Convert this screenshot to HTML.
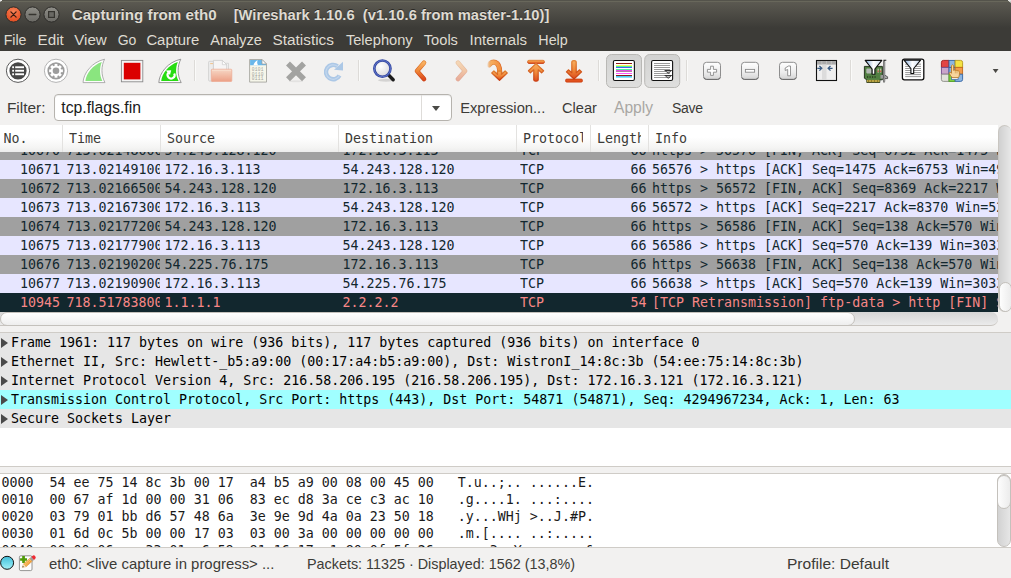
<!DOCTYPE html>
<html><head><meta charset="utf-8"><title>Capturing from eth0 [Wireshark 1.10.6]</title>
<style>*{box-sizing:border-box}
html,body{margin:0;padding:0}
body{width:1011px;height:578px;position:relative;overflow:hidden;background:#f2f1f0;font-family:"Liberation Sans",sans-serif;font-size:15px;color:#3c3b37}
.a{position:absolute}
.ui{position:absolute;font-family:"Liberation Sans",sans-serif;white-space:pre;font-size:15px;line-height:18px;color:#3c3b37}
.mono{font-family:"DejaVu Sans Mono","Liberation Mono",monospace;font-size:13.31px;white-space:pre}
#title{left:0;top:0;width:1011px;height:28px;background:linear-gradient(#54534b 0,#54534b 1px,#68675b 1px,#68675b 2px,#5b5951 2px,#3c3b37 28px);padding-top:1px}
#menubar{left:0;top:28px;width:1011px;height:23px;background:#3c3b37}
.wb{position:absolute;top:6px;width:16px;height:16px;border-radius:8px;border:1px solid #33322e}
#plist{left:0;top:125px;width:998px;height:187px;background:#fff;overflow:hidden}
#phead{left:0;top:0;width:998px;height:27px;background:linear-gradient(#ffffff 0,#ffffff 45%,#f4f4f3 85%,#ececeb 100%);z-index:2}
.hc{position:absolute;top:0;height:27px;line-height:27px;padding-left:6px;color:#3c3b37;border-left:1px solid #e3e2e0;overflow:hidden}
.row{position:absolute;left:0;width:998px;height:19px;line-height:20px;color:#12272e;overflow:hidden}
.c{position:absolute;top:0;height:19px;overflow:hidden}
.lt{background:#e7e6ff}.gr{background:#a0a0a0}.dk{background:#12272e;color:#f78787}
.drow{position:absolute;left:0;width:1011px;height:19px;line-height:20px;color:#000;background:#e6e6e6;padding-left:11px}
.tri{position:absolute;left:0.5px;top:4.5px;width:0;height:0;border-left:7.5px solid #4a4a4a;border-top:5px solid transparent;border-bottom:5px solid transparent}
.hrow{position:absolute;left:1.5px;height:17px;line-height:17px;color:#1a1a1a}
.sep{position:absolute;top:60px;width:2px;height:22px;border-left:1px solid #dbd9d6;border-right:1px solid #fbfbfa}
.ic{position:absolute;overflow:visible}
</style></head><body>
<div id="title" class="a">
<div class="a" style="left:0;top:0;width:2px;height:1px;background:#e8e8e8"></div><div class="a" style="left:0;top:1px;width:1px;height:1px;background:#aaa"></div><div class="a" style="left:1008px;top:0;width:3px;height:1px;background:#e4e4e2"></div><div class="a" style="left:1009px;top:1px;width:2px;height:1px;background:#d0d0cc"></div><div class="a" style="left:1010px;top:2px;width:1px;height:1px;background:#a8a8a2"></div>
<svg class="a" style="left:0;top:0" width="70" height="28" viewBox="0 0 70 28"><defs><radialGradient id="cb" cx="0.5" cy="0.3" r="0.8"><stop offset="0" stop-color="#f58258"/><stop offset="0.6" stop-color="#ea5a2e"/><stop offset="1" stop-color="#d84a20"/></radialGradient><linearGradient id="gb" x1="0" y1="0" x2="0" y2="1"><stop offset="0" stop-color="#8f8e88"/><stop offset="1" stop-color="#6a6964"/></linearGradient></defs><circle cx="13.5" cy="14.5" r="7.6" fill="url(#cb)" stroke="#2e2d2a" stroke-width="1"/><path d="M10.9 11.9L16.1 17.1M16.1 11.9L10.9 17.1" stroke="#3a1c12" stroke-width="1.3" stroke-linecap="round"/><circle cx="32.5" cy="14.5" r="7.6" fill="url(#gb)" stroke="#2e2d2a" stroke-width="1"/><path d="M29.2 14.5H35.8" stroke="#35342f" stroke-width="1.4" stroke-linecap="round"/><circle cx="51.5" cy="14.5" r="7.6" fill="url(#gb)" stroke="#2e2d2a" stroke-width="1"/><rect x="48.6" y="11.6" width="5.8" height="5.8" fill="#6a6964" stroke="#35342f" stroke-width="1.2"/></svg>
<div class="ui" id="f1" style="left:71.7px;top:6px;font-size:15.20px;letter-spacing:0.000px;font-weight:bold;color:#dfdbd2;text-shadow:0 -1px 0 rgba(0,0,0,.5)">Capturing from eth0</div>
<div class="ui" id="f2" style="left:233.7px;top:6px;font-size:14.72px;letter-spacing:0.000px;font-weight:bold;color:#dfdbd2;text-shadow:0 -1px 0 rgba(0,0,0,.5)">[Wireshark 1.10.6  (v1.10.6 from master-1.10)]</div>
</div>
<div id="menubar" class="a">
<div class="ui" id="f3" style="left:3.7px;top:3px;font-size:14.15px;letter-spacing:0.000px;color:#dfdbd2">File</div>
<div class="ui" id="f4" style="left:37.6px;top:3px;font-size:15.20px;letter-spacing:0.000px;color:#dfdbd2">Edit</div>
<div class="ui" id="f5" style="left:74.2px;top:3px;font-size:15.16px;letter-spacing:0.000px;color:#dfdbd2">View</div>
<div class="ui" id="f6" style="left:117.7px;top:3px;font-size:14.00px;letter-spacing:-0.081px;color:#dfdbd2">Go</div>
<div class="ui" id="f7" style="left:146.4px;top:3px;font-size:14.87px;letter-spacing:0.000px;color:#dfdbd2">Capture</div>
<div class="ui" id="f8" style="left:210.2px;top:3px;font-size:14.56px;letter-spacing:0.000px;color:#dfdbd2">Analyze</div>
<div class="ui" id="f9" style="left:272.5px;top:3px;font-size:15.37px;letter-spacing:0.000px;color:#dfdbd2">Statistics</div>
<div class="ui" id="f10" style="left:345.9px;top:3px;font-size:14.65px;letter-spacing:0.000px;color:#dfdbd2">Telephony</div>
<div class="ui" id="f11" style="left:423.8px;top:3px;font-size:14.64px;letter-spacing:0.000px;color:#dfdbd2">Tools</div>
<div class="ui" id="f12" style="left:469.5px;top:3px;font-size:14.99px;letter-spacing:0.000px;color:#dfdbd2">Internals</div>
<div class="ui" id="f13" style="left:538.3px;top:3px;font-size:14.34px;letter-spacing:0.000px;color:#dfdbd2">Help</div>
</div>
<svg class="a" style="left:0;top:51px" width="1011" height="41" viewBox="0 51 1011 41">
<defs>
<linearGradient id="og" x1="0" y1="0" x2="0" y2="1"><stop offset="0" stop-color="#f8b060"/><stop offset="0.5" stop-color="#f08838"/><stop offset="1" stop-color="#dc4a1c"/></linearGradient>
<linearGradient id="ogs" x1="0" y1="0" x2="0" y2="1"><stop offset="0" stop-color="#e08030"/><stop offset="1" stop-color="#c83c10"/></linearGradient>
<linearGradient id="fold" x1="0" y1="0" x2="0" y2="1"><stop offset="0" stop-color="#f8d2bc"/><stop offset="1" stop-color="#ec8c6c"/></linearGradient>
<linearGradient id="btn" x1="0" y1="0" x2="0" y2="1"><stop offset="0" stop-color="#ffffff"/><stop offset="0.6" stop-color="#ececec"/><stop offset="1" stop-color="#d4d4d4"/></linearGradient>
<linearGradient id="tog" x1="0" y1="0" x2="0" y2="1"><stop offset="0" stop-color="#d2d2d1"/><stop offset="1" stop-color="#dfdfde"/></linearGradient>
<linearGradient id="fun" x1="0" y1="0" x2="1" y2="0"><stop offset="0" stop-color="#7fa8d8"/><stop offset="0.5" stop-color="#ffffff"/><stop offset="1" stop-color="#c8daf0"/></linearGradient>
<radialGradient id="lens" cx="0.4" cy="0.35" r="0.7"><stop offset="0" stop-color="#ffffff"/><stop offset="1" stop-color="#d8d8dc"/></radialGradient>
<linearGradient id="tailo" gradientUnits="userSpaceOnUse" x1="487" y1="0" x2="500" y2="0"><stop offset="0" stop-color="#e08030" stop-opacity="0"/><stop offset="0.35" stop-color="#e08030" stop-opacity="0.9"/><stop offset="1" stop-color="#d86020"/></linearGradient><linearGradient id="taili" gradientUnits="userSpaceOnUse" x1="487" y1="0" x2="500" y2="0"><stop offset="0" stop-color="#f8b060" stop-opacity="0"/><stop offset="0.35" stop-color="#f8b060" stop-opacity="0.9"/><stop offset="1" stop-color="#f29040"/></linearGradient>
</defs>
<!-- 1 interfaces -->
<circle cx="18" cy="70.8" r="11.6" fill="#fff" stroke="#5a5a5a" stroke-width="1"/>
<circle cx="18" cy="70.8" r="8.6" fill="#474747"/>
<g fill="#fff"><rect x="12.2" y="66.3" width="1.8" height="1.9"/><rect x="15.2" y="66.3" width="8.8" height="1.9"/><rect x="12.2" y="69.8" width="1.8" height="1.9"/><rect x="15.2" y="69.8" width="8.8" height="1.9"/><rect x="12.2" y="73.3" width="1.8" height="1.9"/><rect x="15.2" y="73.3" width="8.8" height="1.9"/></g>
<!-- 2 options -->
<circle cx="56" cy="70.8" r="11.6" fill="#fff" stroke="#b4b4b4" stroke-width="1"/>
<circle cx="56" cy="70.8" r="8.6" fill="#9c9c9c"/>
<g transform="translate(56 70.8)" fill="#fff">
<circle r="5.2"/>
<g id="teeth"><rect x="-1.4" y="-6.9" width="2.8" height="3"/><rect x="-1.4" y="3.9" width="2.8" height="3"/></g>
<use href="#teeth" transform="rotate(45)"/><use href="#teeth" transform="rotate(90)"/><use href="#teeth" transform="rotate(135)"/>
<circle r="3.3" fill="#9c9c9c"/>
</g>
<!-- 3 start fin -->
<path d="M83 82.6 C83.5 73 92 62 104.6 59.2 C101 66 101 75.5 105 82.6 Z" fill="#fdfdfd" stroke="#a6a6a6" stroke-width="0.9" stroke-linejoin="round"/>
<path d="M85.4 81 C86.2 73.5 92.8 65 101.8 62 C99.3 68 99.5 75.5 102.4 81 Z" fill="#8ae57f"/>
<!-- 4 stop -->
<rect x="121.4" y="60.4" width="21.4" height="21.4" fill="#f4f4f4" stroke="#8a8a8a" stroke-width="0.9"/>
<rect x="123.8" y="62.8" width="16.6" height="16.6" fill="#db0000"/>
<!-- 5 restart fin -->
<path d="M158.8 82.6 C159.3 73 167.8 62 180.8 59.2 C177.2 66 177.2 75.5 181.2 82.6 Z" fill="#fdfdfd" stroke="#8c8c8c" stroke-width="0.9" stroke-linejoin="round"/>
<path d="M161.2 81 C162 73.5 168.6 65 177.8 62 C175.3 68 175.5 75.5 178.6 81 Z" fill="#27dc12"/>
<path d="M174.2 73.4 A3.5 3.5 0 1 1 168.6 72.6" fill="none" stroke="#fff" stroke-width="2.1"/>
<path d="M165.8 70.6 L171.2 70.2 L170 75 Z" fill="#fff"/>
<!-- sep -->
<rect x="194" y="60" width="1" height="21" fill="#dddbd8"/><rect x="195" y="60" width="1" height="21" fill="#fafaf9"/>
<!-- 6 open (disabled) -->
<g opacity="0.8">
<path d="M208.600 62.300 q0 -1 1 -1 h4 v19.800 h-4 q-1 0 -1 -1 z" fill="#ececec" stroke="#c4c4c4" stroke-width="0.800"/>
<rect x="210.200" y="63.200" width="3" height="0.900" fill="#f2b060"/>
<path d="M216 63.300 h12.500 v8 h-12.500 z" fill="#f4f4f4" stroke="#c9c9c9" stroke-width="0.800"/>
<path d="M213.400 60.400 h9 l4.300 4.300 v6 h-13.300 z" fill="#f7f7f7" stroke="#c4c4c4" stroke-width="0.800"/>
<path d="M222.400 60.400 v4.300 h4.300 z" fill="#fff" stroke="#c4c4c4" stroke-width="0.700"/>
<rect x="211.300" y="69.200" width="20.500" height="12.300" rx="0.800" fill="url(#fold)" stroke="#ee9a7c" stroke-width="0.700"/>
<rect x="212" y="69.900" width="19.100" height="0.800" fill="#fbe4d0" opacity="0.800"/>
</g>
<!-- 7 save as (file w/ binary) -->
<path d="M249.600 59.500 h12.400 l4.500 4.500 v18.100 h-16.900 z" fill="#f6f6ea" stroke="#a6a6a0" stroke-width="0.900" stroke-linejoin="round"/>
<path d="M250.100 60 h11.900 l4 4 v1.300 h-15.900 z" fill="#6ab7ea"/>
<path d="M262 59.500 v4.500 h4.500 z" fill="#fdfdfd" stroke="#9c9c96" stroke-width="0.700" stroke-linejoin="round"/>
<path d="M253.500 65.300 c0.600 -2.400 2 -4.200 4.300 -5 c-0.900 1.600 -0.800 3.400 0.300 5 z" fill="#fff"/>
<g font-family="Liberation Mono,monospace" font-size="4.600" letter-spacing="0.240" fill="#a4a49c"><text x="251.800" y="71.100">0101</text><text x="251.800" y="75.600">0110</text><text x="251.800" y="80.100">0111</text></g>
<!-- 8 close -->
<ellipse cx="296" cy="81.200" rx="7" ry="1" fill="#000" opacity="0.060"/>
<path d="M288 63.600 L304 79.200 M304 63.600 L288 79.200" stroke="#a3a3a1" stroke-width="5.600" stroke-linecap="butt"/>
<!-- 9 reload -->
<g opacity="0.95">
<path d="M339.500 75.500 A7.200 7.200 0 1 1 337.500 66.300" fill="none" stroke="#a9c6e6" stroke-width="4.400"/>
<path d="M339.500 75.500 A7.200 7.200 0 1 1 337.500 66.300" fill="none" stroke="#c2d7ee" stroke-width="1.200"/>
<path d="M334 69.800 L343 61.800 L343 70.500 Z" fill="#a9c6e6"/>
</g>
<!-- sep -->
<rect x="358" y="60" width="1" height="21" fill="#dddbd8"/><rect x="359" y="60" width="1" height="21" fill="#fafaf9"/>
<!-- 10 find -->
<ellipse cx="386" cy="80.300" rx="8" ry="1.500" fill="#000" opacity="0.12"/>
<path d="M388.300 74.800 L393.200 79.800" stroke="#1c1c1c" stroke-width="3.400" stroke-linecap="round"/>
<circle cx="382.400" cy="68.600" r="8.100" fill="url(#lens)" stroke="#3447a0" stroke-width="2.600"/>
<circle cx="382.400" cy="68.600" r="8.100" fill="none" stroke="#6278cc" stroke-width="0.900"/>
<!-- 11 back -->
<path d="M424 62.800 L417 71 L424 79" fill="none" stroke="url(#ogs)" stroke-width="4.600" stroke-linecap="round" stroke-linejoin="round"/>
<path d="M424 62.800 L417 71 L424 79" fill="none" stroke="url(#og)" stroke-width="3.400" stroke-linecap="round" stroke-linejoin="round"/>
<!-- 12 forward (disabled) -->
<g opacity="0.4"><path d="M458 62.800 L465 71 L458 79" fill="none" stroke="url(#ogs)" stroke-width="4.600" stroke-linecap="round" stroke-linejoin="round"/>
<path d="M458 62.800 L465 71 L458 79" fill="none" stroke="url(#og)" stroke-width="3.400" stroke-linecap="round" stroke-linejoin="round"/></g>
<!-- 13 jump -->
<g stroke-linejoin="round" stroke-linecap="round">
<path d="M489 65 C491.500 60.500 500 60 499.700 73" fill="none" stroke="url(#tailo)" stroke-width="5.200"/>
<path d="M489 65 C491.500 60.500 500 60 499.700 73" fill="none" stroke="url(#taili)" stroke-width="3.800"/>
<path d="M499.500 80.300 L491.800 73 L493.900 70.900 L497.500 74.200 V71 H501.500 V74.200 L505.100 70.900 L507.200 73 Z" fill="url(#og)" stroke="url(#ogs)" stroke-width="1.300"/>
</g>
<!-- 14 first -->
<g stroke-linejoin="round">
<rect x="527.600" y="60.300" width="16.800" height="3.100" rx="1.300" fill="url(#og)" stroke="url(#ogs)" stroke-width="0.900"/>
<path d="M536 63.600 L543.600 70.800 L541.600 72.800 L538.200 69.800 V80 Q538.200 81.200 536 81.200 Q533.800 81.200 533.800 80 V69.800 L530.400 72.800 L528.400 70.800 Z" fill="url(#og)" stroke="url(#ogs)" stroke-width="1.200"/>
</g>
<!-- 15 last -->
<g stroke-linejoin="round">
<rect x="565.600" y="79.100" width="16.800" height="3" rx="1.200" fill="#e2521e" stroke="#cc4012" stroke-width="0.900"/>
<path d="M574 79 L581.600 71.800 L579.600 69.800 L576.200 72.800 V61.800 Q576.200 60.600 574 60.600 Q571.800 60.600 571.800 61.800 V72.800 L568.400 69.800 L566.400 71.800 Z" fill="url(#og)" stroke="url(#ogs)" stroke-width="1.200"/>
</g>
<!-- sep -->
<rect x="598" y="60" width="1" height="21" fill="#dddbd8"/><rect x="599" y="60" width="1" height="21" fill="#fafaf9"/>
<!-- 16 colorize toggle -->
<rect x="606.500" y="54.500" width="35" height="33" rx="5" fill="url(#tog)" stroke="#b9b8b5" stroke-width="1"/>
<rect x="613.400" y="60.500" width="21" height="20" rx="1.500" fill="#fff" stroke="#111" stroke-width="1.100"/>
<g>
<rect x="616" y="63" width="16" height="1" fill="#8b1a1a"/>
<rect x="616" y="65" width="16" height="1" fill="#f6f65a"/>
<rect x="616" y="66" width="16" height="1" fill="#48f09a"/>
<rect x="616" y="67" width="16" height="1" fill="#4a62f0"/>
<rect x="616" y="69" width="16" height="1" fill="#48f09a"/>
<rect x="616" y="70" width="16" height="1" fill="#e050e0"/>
<rect x="616" y="71" width="16" height="0.800" fill="#a05a8a"/>
<rect x="616" y="73" width="16" height="1" fill="#ff55ff"/>
<rect x="616" y="75" width="16" height="1" fill="#8b1a1a"/>
<rect x="616" y="76" width="16" height="1.600" fill="#48cdf0"/>
</g>
<!-- 17 autoscroll toggle -->
<rect x="644.700" y="54.500" width="35" height="33" rx="5" fill="url(#tog)" stroke="#b9b8b5" stroke-width="1"/>
<rect x="651.600" y="60.500" width="21" height="20" rx="1.500" fill="#fff" stroke="#111" stroke-width="1.100"/>
<g fill="#8e8e8e">
<rect x="654" y="63" width="16" height="0.900"/><rect x="654" y="65" width="16" height="0.900"/><rect x="654" y="67" width="16" height="0.900"/><rect x="654" y="69" width="16" height="0.900"/><rect x="654" y="71" width="16" height="0.900"/><rect x="654" y="73" width="16" height="0.900"/><rect x="654" y="75" width="16" height="0.900"/><rect x="654" y="77" width="16" height="0.900"/>
</g>
<path d="M664 70 h8.500 l-4.250 3.800 z M664 75 h8.500 l-4.250 3.800 z" fill="#333"/>
<path d="M666 71 h4.500 l-2.250 1.800 z M666 76 h4.500 l-2.250 1.800 z" fill="#bbb"/>
<!-- sep -->
<rect x="686" y="60" width="1" height="21" fill="#dddbd8"/><rect x="687" y="60" width="1" height="21" fill="#fafaf9"/>
<!-- 18-20 zoom -->
<g>
<rect x="703.500" y="62.300" width="17" height="17" rx="3" fill="url(#btn)" stroke="#8e8e8e" stroke-width="1"/>
<path d="M703.800 77.500 q0.500 2 3 2 h10.500 q2.500 0 3 -2" fill="none" stroke="#6e6e6e" stroke-width="1"/>
<path d="M710.600 66.200 h2.800 v3.200 h3.200 v2.800 h-3.200 v3.200 h-2.800 v-3.200 h-3.200 v-2.800 h3.200 z" fill="#fff" stroke="#8a8a8a" stroke-width="0.900"/>
<rect x="741.500" y="62.300" width="17" height="17" rx="3" fill="url(#btn)" stroke="#8e8e8e" stroke-width="1"/>
<path d="M741.800 77.500 q0.500 2 3 2 h10.500 q2.500 0 3 -2" fill="none" stroke="#6e6e6e" stroke-width="1"/>
<rect x="745.400" y="69.400" width="9.200" height="2.800" fill="#fff" stroke="#8a8a8a" stroke-width="0.900"/>
<rect x="779.500" y="62.300" width="17" height="17" rx="3" fill="url(#btn)" stroke="#8e8e8e" stroke-width="1"/>
<path d="M779.800 77.500 q0.500 2 3 2 h10.500 q2.500 0 3 -2" fill="none" stroke="#6e6e6e" stroke-width="1"/>
<path d="M785.200 68 l3.300 -2 h2 v9.800 h-2.800 v-6.300 l-2.500 1 z" fill="#fff" stroke="#8a8a8a" stroke-width="0.900"/>
</g>
<!-- 21 resize columns -->
<rect x="816.500" y="60.500" width="20" height="20" fill="#efefef" stroke="#111" stroke-width="1.100"/>
<rect x="817" y="61" width="19" height="3.600" fill="#aaa"/>
<rect x="822" y="64.600" width="4.500" height="15.400" fill="#dcdcdc"/>
<path d="M821.800 61 v3.600 M826.500 61 v3.600 M831.300 61 v3.600" stroke="#c8c8c8" stroke-width="0.700"/>
<path d="M817.300 68.300 h3.600 M819.400 66 l2.400 2.300 l-2.400 2.300 M832.600 68.300 h-3.600 M830.500 66 l-2.400 2.300 l2.400 2.300" fill="none" stroke="#3a5c84" stroke-width="1.300"/>
<!-- sep -->
<rect x="850" y="60" width="1" height="21" fill="#dddbd8"/><rect x="851" y="60" width="1" height="21" fill="#fafaf9"/>
<!-- 22 capture filter -->
<g>
<path d="M864.400 66.400 h18 v13.400 h-2.600 v2.700 h-13 v-2.700 l-2.400 -1.600 z" fill="#517f42" stroke="#1c2a16" stroke-width="0.900" stroke-linejoin="round"/>
<rect x="866.800" y="79.900" width="12.800" height="2.300" fill="#b9a544"/>
<path d="M868.500 80 v2.200 M871.500 80 v2.200 M874.500 80 v2.200 M877.500 80 v2.200" stroke="#7c6c24" stroke-width="0.700"/>
<rect x="866.300" y="68.600" width="5.400" height="4.800" rx="0.800" fill="#b4b8b4"/>
<rect x="877.600" y="68.600" width="1.100" height="4" fill="#d8d0c0"/><rect x="880.200" y="68.600" width="1.100" height="4" fill="#d8d0c0"/>
<rect x="877.600" y="70.600" width="1.100" height="1.200" fill="#d03020"/><rect x="880.200" y="70.600" width="1.100" height="1.200" fill="#d03020"/>
<path d="M867 77 h1.200 M869.500 77 h1.200 M872 77 h1.200 M874.500 77 h1.200" stroke="#2a3a1e" stroke-width="1.300"/>
<rect x="880.500" y="75" width="3" height="3.600" fill="#9a9a9a"/>
<path d="M886.300 60.300 h-2.300 V82.600" fill="none" stroke="#1a1a1a" stroke-width="1.100"/>
<rect x="884.700" y="61.500" width="1" height="20" fill="#c8c8c8"/>
<path d="M885 75.300 l2.600 1.500 v1.800 l-2.600 0" fill="#aaa" stroke="#333" stroke-width="0.700"/>
<path d="M865.200 60.400 h16.600 l-6.900 8.600 v5.200 h-2.800 v-5.200 z" fill="url(#fun)" stroke="#0c0c0c" stroke-width="1.100" stroke-linejoin="round"/>
</g>
<!-- 23 display filter -->
<g>
<rect x="902.400" y="59.100" width="21.400" height="20.700" rx="2" fill="#fff" stroke="#0c0c0c" stroke-width="1.300"/>
<g fill="#8a8a8a"><rect x="905.200" y="63.700" width="15.800" height="0.900"/><rect x="905.200" y="65.900" width="15.800" height="0.900"/><rect x="905.200" y="68" width="15.800" height="0.900"/><rect x="905.200" y="70.100" width="15.800" height="0.900"/><rect x="905.200" y="72.200" width="15.800" height="0.900"/><rect x="905.200" y="74.200" width="15.800" height="0.900"/><rect x="905.200" y="76.200" width="15.800" height="0.900"/></g>
<path d="M904 60.100 h16.600 l-6.900 8.400 v5 h-2.800 v-5 z" fill="url(#fun)" stroke="#0c0c0c" stroke-width="1.100" stroke-linejoin="round"/>
</g>
<!-- 24 coloring rules -->
<g stroke-width="0.900">
<rect x="941.300" y="60.300" width="21.400" height="21.200" rx="2" fill="#e2e2da"/>
<path d="M941.400 67.400 v-5 q0 -2 2 -2 h5.600 v7 z" fill="#e24444" stroke="#a01c1c"/>
<rect x="949" y="60.400" width="6.100" height="7" fill="#8cb6e2" stroke="#3464a4"/>
<path d="M955.100 60.400 h5.500 q2 0 2 2 v5 h-7.500 z" fill="#f4e244" stroke="#b89a1c"/>
<rect x="941.400" y="67.400" width="7.600" height="6.800" fill="#caa4ca" stroke="#744c8c"/>
<rect x="949" y="67.400" width="6.100" height="6.800" fill="#8cb6e2" stroke="#3464a4"/>
<rect x="955.100" y="67.400" width="7.500" height="6.800" fill="#f29c4c" stroke="#c46c1c"/>
<path d="M941.400 74.200 h7.600 v7.200 h-5.600 q-2 0 -2 -2 z" fill="#e2e2da" stroke="#8c8c88"/>
<rect x="949" y="74.200" width="6.100" height="7.200" fill="#84d244" stroke="#4c9c1c"/>
<path d="M955.100 74.200 h7.500 v5.200 q0 2 -2 2 h-5.500 z" fill="#8cb6e2" stroke="#3464a4"/>
<rect x="951.500" y="77.300" width="6.600" height="2.300" fill="#fff" stroke="#3464a4" stroke-width="0.700"/>
<path d="M951.500 65.600 q1.050 -1.700 2.100 0 v4.800 q0.900 -0.700 1.700 0.100 q0.900 -0.600 1.700 0.200 q1.100 -0.500 1.700 0.400 q0.700 0.200 0.700 1.200 v2.400 q0 1.800 -1.200 3 h-6 q-1.600 -1.800 -2.800 -4 q-0.500 -1.200 0.600 -1.500 q0.700 0 1.500 1.100 z" fill="#f7d59c" stroke="#b8741c" stroke-width="0.800" stroke-linejoin="round"/>
<path d="M955.300 70.800 v2.600 M957 71 v2.400" stroke="#c8903c" stroke-width="0.600" fill="none"/>
</g>
<!-- 25 dropdown -->
<path d="M992.700 69 h5.800 l-2.900 4 z" fill="#4a4945"/>
</svg>

<div class="ui" id="f14" style="left:6.9px;top:99px;font-size:15.44px;letter-spacing:0.000px;">Filter:</div>
<div class="a" id="fbox" style="left:54px;top:94px;width:398px;height:27px;background:#fff;border:1px solid #b6b3ae;border-radius:4px;box-shadow:inset 0 1px 1px rgba(0,0,0,.08)"><div class="a" style="left:366px;top:0;width:1px;height:25px;background:#dedcd9"></div><div class="a" style="left:377px;top:11px;width:0;height:0;border-top:5px solid #4a4a46;border-left:4px solid transparent;border-right:4px solid transparent"></div></div>
<div class="ui" id="f15" style="left:61.3px;top:99px;font-size:15.74px;letter-spacing:0.000px;color:#1a1a1a">tcp.flags.fin</div>
<div class="ui" id="f16" style="left:460.2px;top:99px;font-size:14.72px;letter-spacing:0.000px;">Expression...</div>
<div class="ui" id="f17" style="left:562.0px;top:99px;font-size:14.64px;letter-spacing:0.000px;">Clear</div>
<div class="ui" id="f18" style="left:614.0px;top:99px;font-size:15.59px;letter-spacing:0.000px;color:#a9a7a3">Apply</div>
<div class="ui" id="f19" style="left:672.0px;top:99px;font-size:14.00px;letter-spacing:-0.308px;">Save</div>
<div id="plist" class="a mono">
<div id="phead" class="a">
<div class="hc" style="left:0px;width:62px;border-left:none;padding-left:3.5px;"><div style="width:48px;overflow:hidden">No.</div></div>
<div class="hc" style="left:62px;width:98px;"><div style="width:84px;overflow:hidden">Time</div></div>
<div class="hc" style="left:160px;width:178px;"><div style="width:164px;overflow:hidden">Source</div></div>
<div class="hc" style="left:338px;width:178px;"><div style="width:164px;overflow:hidden">Destination</div></div>
<div class="hc" style="left:516px;width:74px;"><div style="width:60px;overflow:hidden">Protocol</div></div>
<div class="hc" style="left:590px;width:58px;"><div style="width:44px;overflow:hidden">Length</div></div>
<div class="hc" style="left:648px;width:350px;"><div style="width:336px;overflow:hidden">Info</div></div>
</div>
<div class="row gr" style="top:16px">
<div class="c" style="left:0;width:60px;text-align:right">10670</div>
<div class="c" style="left:66.5px;width:93px">713.021480000</div>
<div class="c" style="left:164.5px;width:173px">54.243.128.120</div>
<div class="c" style="left:342.5px;width:173px">172.16.3.113</div>
<div class="c" style="left:520px;width:69px">TCP</div>
<div class="c" style="left:590px;width:56.5px;text-align:right">66</div>
<div class="c" style="left:652px;width:345.5px">https &gt; 56576 [FIN, ACK] Seq=6752 Ack=1475 Win=17920 Len=0 TSval=2</div>
</div>
<div class="row lt" style="top:35px">
<div class="c" style="left:0;width:60px;text-align:right">10671</div>
<div class="c" style="left:66.5px;width:93px">713.021491000</div>
<div class="c" style="left:164.5px;width:173px">172.16.3.113</div>
<div class="c" style="left:342.5px;width:173px">54.243.128.120</div>
<div class="c" style="left:520px;width:69px">TCP</div>
<div class="c" style="left:590px;width:56.5px;text-align:right">66</div>
<div class="c" style="left:652px;width:345.5px">56576 &gt; https [ACK] Seq=1475 Ack=6753 Win=49536 Len=0</div>
</div>
<div class="row gr" style="top:54px">
<div class="c" style="left:0;width:60px;text-align:right">10672</div>
<div class="c" style="left:66.5px;width:93px">713.021665000</div>
<div class="c" style="left:164.5px;width:173px">54.243.128.120</div>
<div class="c" style="left:342.5px;width:173px">172.16.3.113</div>
<div class="c" style="left:520px;width:69px">TCP</div>
<div class="c" style="left:590px;width:56.5px;text-align:right">66</div>
<div class="c" style="left:652px;width:345.5px">https &gt; 56572 [FIN, ACK] Seq=8369 Ack=2217 Win=17920 Len=0</div>
</div>
<div class="row lt" style="top:73px">
<div class="c" style="left:0;width:60px;text-align:right">10673</div>
<div class="c" style="left:66.5px;width:93px">713.021673000</div>
<div class="c" style="left:164.5px;width:173px">172.16.3.113</div>
<div class="c" style="left:342.5px;width:173px">54.243.128.120</div>
<div class="c" style="left:520px;width:69px">TCP</div>
<div class="c" style="left:590px;width:56.5px;text-align:right">66</div>
<div class="c" style="left:652px;width:345.5px">56572 &gt; https [ACK] Seq=2217 Ack=8370 Win=52480 Len=0</div>
</div>
<div class="row gr" style="top:92px">
<div class="c" style="left:0;width:60px;text-align:right">10674</div>
<div class="c" style="left:66.5px;width:93px">713.021772000</div>
<div class="c" style="left:164.5px;width:173px">54.243.128.120</div>
<div class="c" style="left:342.5px;width:173px">172.16.3.113</div>
<div class="c" style="left:520px;width:69px">TCP</div>
<div class="c" style="left:590px;width:56.5px;text-align:right">66</div>
<div class="c" style="left:652px;width:345.5px">https &gt; 56586 [FIN, ACK] Seq=138 Ack=570 Win=16896 Len=0</div>
</div>
<div class="row lt" style="top:111px">
<div class="c" style="left:0;width:60px;text-align:right">10675</div>
<div class="c" style="left:66.5px;width:93px">713.021779000</div>
<div class="c" style="left:164.5px;width:173px">172.16.3.113</div>
<div class="c" style="left:342.5px;width:173px">54.243.128.120</div>
<div class="c" style="left:520px;width:69px">TCP</div>
<div class="c" style="left:590px;width:56.5px;text-align:right">66</div>
<div class="c" style="left:652px;width:345.5px">56586 &gt; https [ACK] Seq=570 Ack=139 Win=30336 Len=0</div>
</div>
<div class="row gr" style="top:130px">
<div class="c" style="left:0;width:60px;text-align:right">10676</div>
<div class="c" style="left:66.5px;width:93px">713.021902000</div>
<div class="c" style="left:164.5px;width:173px">54.225.76.175</div>
<div class="c" style="left:342.5px;width:173px">172.16.3.113</div>
<div class="c" style="left:520px;width:69px">TCP</div>
<div class="c" style="left:590px;width:56.5px;text-align:right">66</div>
<div class="c" style="left:652px;width:345.5px">https &gt; 56638 [FIN, ACK] Seq=138 Ack=570 Win=16896 Len=0</div>
</div>
<div class="row lt" style="top:149px">
<div class="c" style="left:0;width:60px;text-align:right">10677</div>
<div class="c" style="left:66.5px;width:93px">713.021909000</div>
<div class="c" style="left:164.5px;width:173px">172.16.3.113</div>
<div class="c" style="left:342.5px;width:173px">54.225.76.175</div>
<div class="c" style="left:520px;width:69px">TCP</div>
<div class="c" style="left:590px;width:56.5px;text-align:right">66</div>
<div class="c" style="left:652px;width:345.5px">56638 &gt; https [ACK] Seq=570 Ack=139 Win=30336 Len=0</div>
</div>
<div class="row dk" style="top:168px">
<div class="c" style="left:0;width:60px;text-align:right">10945</div>
<div class="c" style="left:66.5px;width:93px">718.517838000</div>
<div class="c" style="left:164.5px;width:173px">1.1.1.1</div>
<div class="c" style="left:342.5px;width:173px">2.2.2.2</div>
<div class="c" style="left:520px;width:69px">TCP</div>
<div class="c" style="left:590px;width:56.5px;text-align:right">54</div>
<div class="c" style="left:652px;width:345.5px">[TCP Retransmission] ftp-data &gt; http [FIN] Seq=1 Win=8192 Len=0</div>
</div>
<div id="pheadc" class="a"></div>
</div>
<div class="a" style="left:998px;top:125px;width:13px;height:187px;border-radius:7px 7px 7px 7px;background:linear-gradient(90deg,#d0d0d0,#e8e8e8);border:1px solid #c9c6c1;border-right:none"></div>
<div class="a" style="left:998.5px;top:282px;width:13px;height:30px;border-radius:7px;background:linear-gradient(90deg,#fdfdfd,#ececec);border:1px solid #c4c1bc"></div>
<div class="a" style="left:0;top:312px;width:998px;height:14px;border-radius:0 7px 7px 0;background:linear-gradient(#d6d6d6,#ebebeb);border-bottom:1px solid #c9c5c0"></div>
<div class="a" style="left:0px;top:312px;width:855px;height:13.5px;border-radius:7px;background:linear-gradient(#ffffff,#eeeeee);border:1px solid #c4c1bc"></div>
<div class="a" style="left:0;top:332px;width:1011px;height:135px;background:#fff;border-top:1px solid #cfccc7;border-bottom:1px solid #cfccc7"></div>
<div class="drow mono" style="top:333px;"><span class="tri"></span>Frame 1961: 117 bytes on wire (936 bits), 117 bytes captured (936 bits) on interface 0</div>
<div class="drow mono" style="top:352px;"><span class="tri"></span>Ethernet II, Src: Hewlett-_b5:a9:00 (00:17:a4:b5:a9:00), Dst: WistronI_14:8c:3b (54:ee:75:14:8c:3b)</div>
<div class="drow mono" style="top:371px;"><span class="tri"></span>Internet Protocol Version 4, Src: 216.58.206.195 (216.58.206.195), Dst: 172.16.3.121 (172.16.3.121)</div>
<div class="drow mono" style="top:390px;background:#a0ffff;"><span class="tri"></span>Transmission Control Protocol, Src Port: https (443), Dst Port: 54871 (54871), Seq: 4294967234, Ack: 1, Len: 63</div>
<div class="drow mono" style="top:409px;"><span class="tri"></span>Secure Sockets Layer</div>
<div class="a" style="left:0;top:473px;width:1011px;height:75px;background:#fff;border-top:1px solid #cfccc7;border-bottom:1px solid #cfccc7;overflow:hidden" class="mono">
<div class="hrow mono" style="top:0px">0000  54 ee 75 14 8c 3b 00 17  a4 b5 a9 00 08 00 45 00   T.u..;.. ......E.</div>
<div class="hrow mono" style="top:17px">0010  00 67 af 1d 00 00 31 06  83 ec d8 3a ce c3 ac 10   .g....1. ...:....</div>
<div class="hrow mono" style="top:34px">0020  03 79 01 bb d6 57 48 6a  3e 9e 9d 4a 0a 23 50 18   .y...WHj &gt;..J.#P.</div>
<div class="hrow mono" style="top:51px">0030  01 6d 0c 5b 00 00 17 03  03 00 3a 00 00 00 00 00   .m.[.... ..:.....</div>
<div class="hrow mono" style="top:68px">0040  00 00 06 ce 33 01 e6 59  91 16 17 c1 80 0f 5f 26   ....3..Y ......_&amp;</div>
<div class="a" style="left:997px;top:0;width:14px;height:73px;border-radius:7px;background:linear-gradient(90deg,#d2d2d2,#e6e6e6);border:1px solid #c4c1bc"></div>
<div class="a" style="left:997px;top:0.5px;width:14px;height:34px;border-radius:7px;background:linear-gradient(90deg,#fdfdfd,#ececec);border:1px solid #c4c1bc"></div>
</div>
<svg class="a" style="left:0;top:548px" width="48" height="30" viewBox="0 548 48 30">
<defs>
<linearGradient id="cy" x1="0" y1="0" x2="0" y2="1"><stop offset="0" stop-color="#44bcd6"/><stop offset="0.45" stop-color="#6ad6e8"/><stop offset="1" stop-color="#a6f2f8"/></linearGradient>
<linearGradient id="pen" x1="0" y1="0" x2="1" y2="1"><stop offset="0" stop-color="#f8b850"/><stop offset="1" stop-color="#ec8a14"/></linearGradient>
</defs>
<circle cx="7.100" cy="562.800" r="6.500" fill="url(#cy)" stroke="#101010" stroke-width="1"/>
<rect x="19.400" y="555.800" width="12.600" height="14.800" rx="1.400" fill="#fdfdfd" stroke="#7c7c7a" stroke-width="0.800"/>
<path d="M22.200 556.100 h2.700 v2.100 h2.100 v2.600 h-2.100 v2.100 h-2.700 v-2.100 h-2.100 v-2.600 h2.100 z" fill="#4e9a06"/>
<g transform="translate(22.400 567.300) rotate(-41)">
<path d="M0 0 L3.200 -1.900 H11.400 V1.900 H3.200 Z" fill="url(#pen)" stroke="#c87414" stroke-width="0.400"/>
<path d="M0 0 L3.200 -1.900 V1.900 Z" fill="#f4e0c0"/>
<path d="M0 0 L1.300 -0.600 V0.600 Z" fill="#111"/>
<path d="M4.500 -1.900 V1.900 M6 -1.900 V1.900 M7.500 -1.900 V1.900 M9 -1.900 V1.900 M10.500 -1.900 V1.900" stroke="#fbe2b4" stroke-width="0.500"/>
<rect x="11.400" y="-2" width="2.200" height="4" fill="#a0a09c"/>
<path d="M13.600 -2 h1.400 q2 0 2 2 q0 2 -2 2 h-1.400 z" fill="#ee2c34"/>
</g>
</svg>

<div class="ui" id="f20" style="left:49.0px;top:555px;font-size:14.91px;letter-spacing:0.000px;">eth0: &lt;live capture in progress&gt; ...</div>
<div class="ui" id="f21" style="left:307.0px;top:555px;font-size:14.36px;letter-spacing:0.000px;">Packets: 11325 · Displayed: 1562 (13,8%)</div>
<div class="ui" id="f22" style="left:787.0px;top:555px;font-size:15.55px;letter-spacing:0.000px;">Profile: Default</div>
</body></html>
